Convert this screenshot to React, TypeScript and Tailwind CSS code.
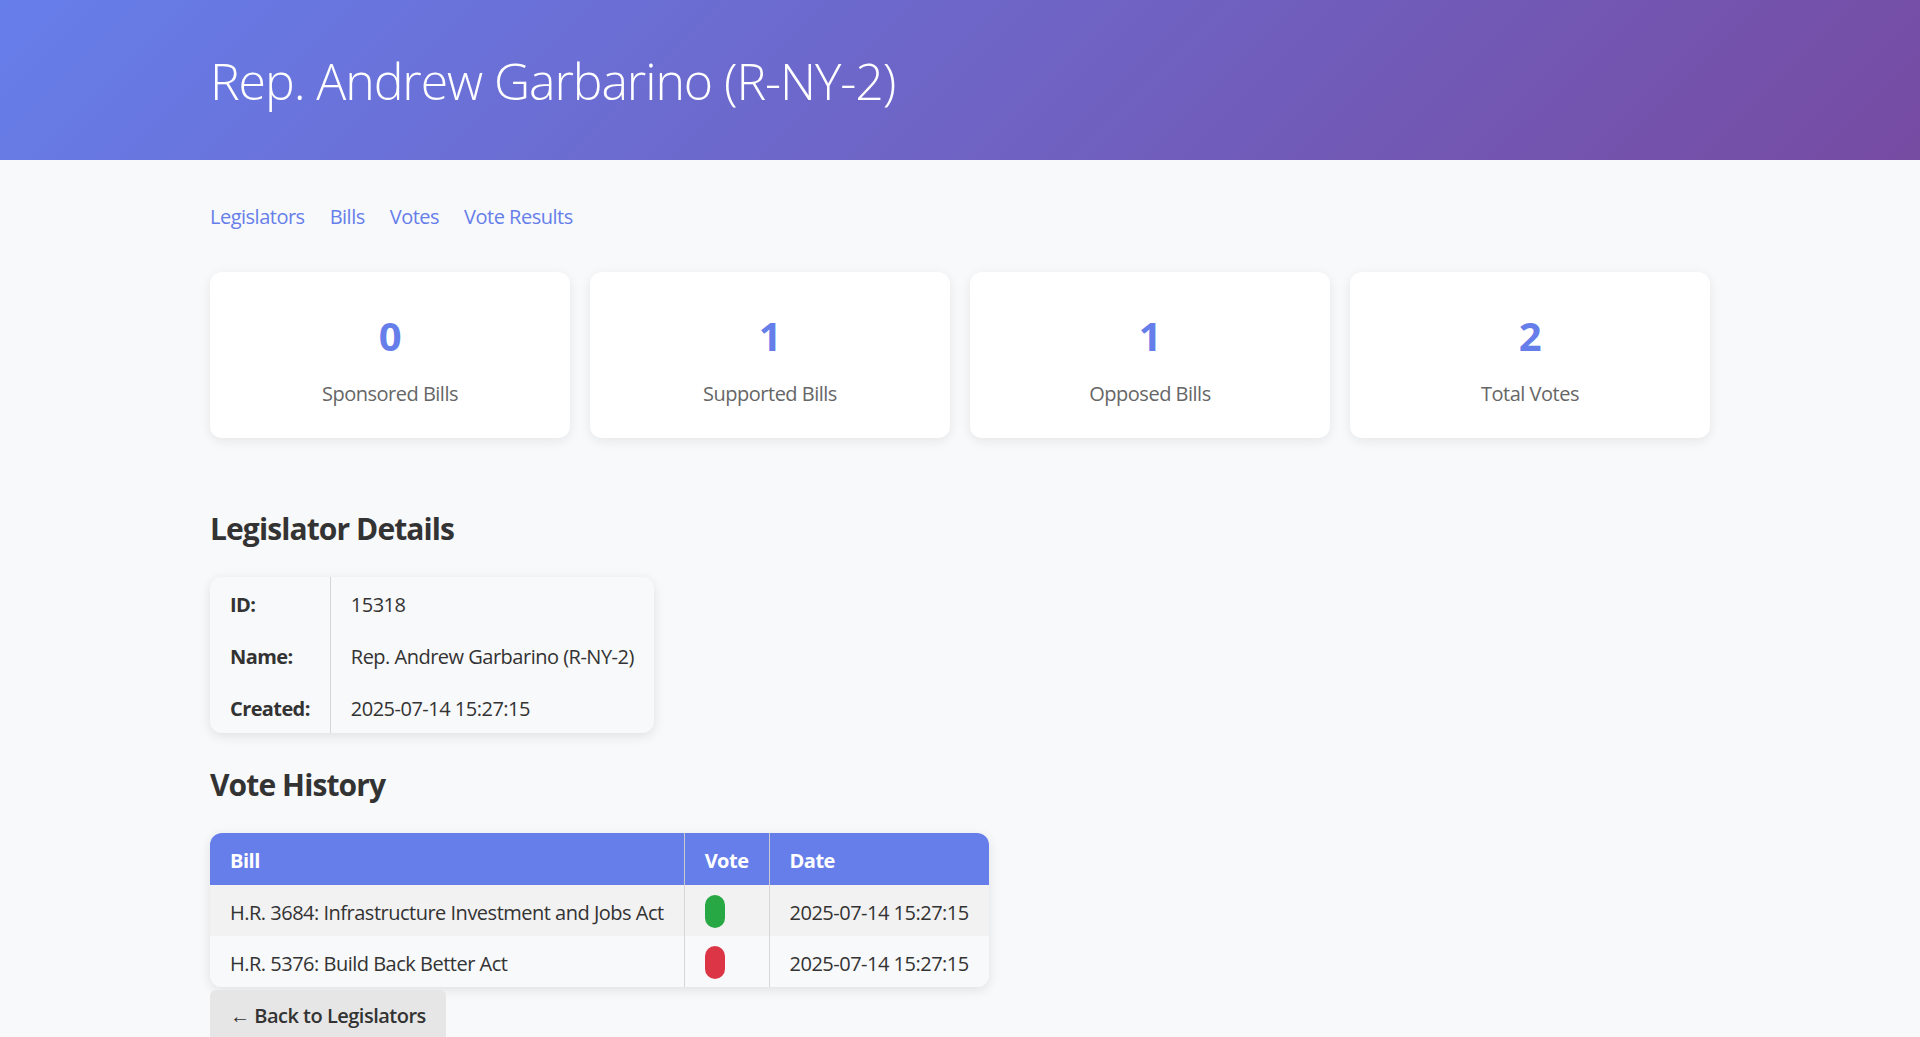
import React from "react";

const stats = [
  { value: "0", label: "Sponsored Bills" },
  { value: "1", label: "Supported Bills" },
  { value: "1", label: "Opposed Bills" },
  { value: "2", label: "Total Votes" },
];

const votes = [
  { bill: "H.R. 3684: Infrastructure Investment and Jobs Act", yes: true, date: "2025-07-14 15:27:15" },
  { bill: "H.R. 5376: Build Back Better Act", yes: false, date: "2025-07-14 15:27:15" },
];

export default function App() {
  return (
    <div className="min-h-screen bg-[#f8f9fa] font-['Open_Sans',sans-serif] text-[#333]">
      <header className="h-[160px] bg-[linear-gradient(135deg,#667eea_0%,#764ba2_100%)]">
        <div className="mx-auto w-[1500px] pt-[49px]">
          <h1 className="text-[50px] font-light leading-[64px] tracking-[-1.1px] text-white">
            Rep. Andrew Garbarino (R-NY-2)
          </h1>
        </div>
      </header>

      <main className="mx-auto w-[1500px] pb-10 tracking-[-0.5px]">
        <nav className="mt-[43px] flex gap-[25px] text-[20px] leading-[28px]">
          <a className="text-[#667eea]" href="#">Legislators</a>
          <a className="text-[#667eea]" href="#">Bills</a>
          <a className="text-[#667eea]" href="#">Votes</a>
          <a className="text-[#667eea]" href="#">Vote Results</a>
        </nav>

        <div className="mt-[41px] grid grid-cols-4 gap-[20px]">
          {stats.map((s) => (
            <div
              key={s.label}
              className="flex h-[166px] flex-col items-center rounded-[12px] bg-white pt-[40px] shadow-[0_3px_12px_rgba(0,0,0,0.08)]"
            >
              <div className="text-[40px] font-bold leading-[48px] text-[#667eea]">{s.value}</div>
              <div className="mt-[20px] text-[20px] leading-[28px] text-[#666]">{s.label}</div>
            </div>
          ))}
        </div>

        <h2 className="mt-[73px] text-[30px] font-bold leading-[36px] tracking-[-0.9px] text-[#333]">
          Legislator Details
        </h2>

        <div className="mt-[30px] w-fit overflow-hidden rounded-[12px] bg-[#f8f9fa] shadow-[0_3px_12px_rgba(0,0,0,0.1)]">
          <table className="text-[20px] leading-[28px]">
            <tbody>
              {[
                ["ID:", "15318"],
                ["Name:", "Rep. Andrew Garbarino (R-NY-2)"],
                ["Created:", "2025-07-14 15:27:15"],
              ].map(([k, v]) => (
                <tr key={k} className="h-[52px]">
                  <td className="border-r border-[#d6d6d6] px-[20px] pt-[4px] text-left font-bold tracking-[-0.6px]">
                    {k}
                  </td>
                  <td className="px-[20px] pt-[4px] text-left">{v}</td>
                </tr>
              ))}
            </tbody>
          </table>
        </div>

        <h2 className="mt-[34px] text-[30px] font-bold leading-[36px] tracking-[-0.9px] text-[#333]">
          Vote History
        </h2>

        <div className="mt-[30px] w-fit overflow-hidden rounded-[12px] bg-[#f8f9fa] shadow-[0_3px_12px_rgba(0,0,0,0.1)]">
          <table className="text-[20px] leading-[28px]">
            <thead>
              <tr className="h-[52px] bg-[#667eea] text-white">
                <th className="border-r border-[#c9c9c9] px-[20px] pt-[4px] text-left font-bold">Bill</th>
                <th className="border-r border-[#c9c9c9] px-[20px] pt-[4px] text-left font-bold">Vote</th>
                <th className="px-[20px] pt-[4px] text-left font-bold">Date</th>
              </tr>
            </thead>
            <tbody>
              {votes.map((v, i) => (
                <tr key={v.bill} className={i === 0 ? "h-[51px] bg-[#f2f2f2]" : "h-[51px] bg-[#f8f9fa]"}>
                  <td className="border-r border-[#d6d6d6] px-[20px] pt-[4px] text-left">{v.bill}</td>
                  <td className="border-r border-[#d6d6d6] px-[20px] pt-[2px] text-left">
                    <span
                      className={
                        v.yes
                          ? "block h-[33px] w-[20px] rounded-full bg-[#28a745]"
                          : "block h-[33px] w-[20px] rounded-full bg-[#dc3545]"
                      }
                    />
                  </td>
                  <td className="px-[20px] pt-[4px] text-left">{v.date}</td>
                </tr>
              ))}
            </tbody>
          </table>
        </div>

        <button className="mt-[3px] rounded-[6px] bg-[#e6e6e6] px-[20px] py-[12px] text-[20px] font-semibold leading-[28px] text-[#333]">
          ← Back to Legislators
        </button>
      </main>
    </div>
  );
}
